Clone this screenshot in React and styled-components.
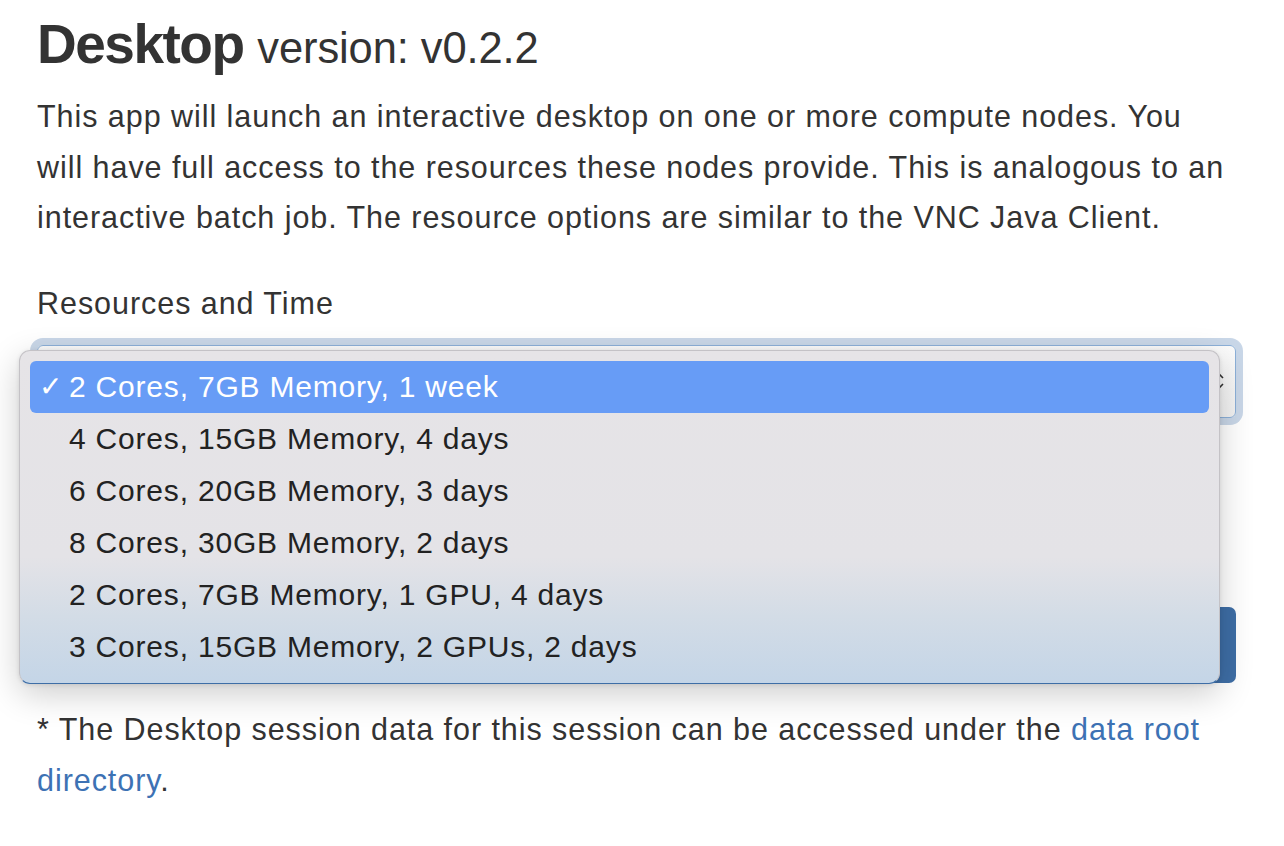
import React from "react";
import styled, { createGlobalStyle } from "styled-components";

const options = [
  "2 Cores, 7GB Memory, 1 week",
  "4 Cores, 15GB Memory, 4 days",
  "6 Cores, 20GB Memory, 3 days",
  "8 Cores, 30GB Memory, 2 days",
  "2 Cores, 7GB Memory, 1 GPU, 4 days",
  "3 Cores, 15GB Memory, 2 GPUs, 2 days",
];

const App = () => {
  return (
    <Page>
      <GlobalStyle />
      <Title>
        Desktop <small>version: v0.2.2</small>
      </Title>
      <Text>
        This app will launch an interactive desktop on one or more compute nodes. You
        will have full access to the resources these nodes provide. This is analogous to an
        interactive batch job. The resource options are similar to the VNC Java Client.
      </Text>
      <Group>
        <Label>Resources and Time</Label>
        <Select>
          <Chevron viewBox="0 0 12 20">
            <path d="M2 7 L6 3 L10 7 M2 13 L6 17 L10 13" />
          </Chevron>
        </Select>
        <Menu>
          {options.map((o, i) => (
            <Item key={o} $active={i === 0}>
              <Check>{i === 0 ? "✓" : ""}</Check>
              {o}
            </Item>
          ))}
        </Menu>
      </Group>
      {/* the launch button sits under the open menu, its label hidden */}
      <Launch aria-label="Launch" />
      <Footer>
        * The Desktop session data for this session can be accessed under the{" "}
        <a href="#">data root directory</a>.
      </Footer>
    </Page>
  );
};

const GlobalStyle = createGlobalStyle`
body{
    margin: 0;
    background: #fff;
    font-family: "Liberation Sans", Arial, sans-serif;
    color: #333;
}
`;

const Page = styled.div`
width: 1199px;
padding: 14px 48px 40px 37px;
`;

const Title = styled.h1`
margin: 0 0 13px;
font-size: 55px;
line-height: 60px;
font-weight: 700;
letter-spacing: -1.5px;
color: #333;
small{
    font-size: 43.5px;
    font-weight: 400;
    letter-spacing: -0.1px;
}
`;

const Text = styled.p`
margin: 0;
font-size: 30.5px;
line-height: 50.5px;
letter-spacing: 0.95px;
`;

const Group = styled.div`
position: relative;
margin-top: 35px;
`;

const Label = styled.div`
font-size: 30.5px;
line-height: 50px;
letter-spacing: 0.95px;
margin-bottom: 17px;
`;

const Select = styled.div`
height: 71px;
border: 1px solid #8cb0d8;
border-radius: 6px;
background: linear-gradient(#fbfbfb, #f2f2f2);
box-shadow: 0 0 0 7px #c9d7e8;
display: flex;
align-items: center;
justify-content: flex-end;
padding-right: 10px;
`;

const Chevron = styled.svg`
width: 12px;
height: 20px;
fill: none;
stroke: #333;
stroke-width: 1.6;
`;

const Menu = styled.div`
position: absolute;
left: -18px;
top: 72px;
width: 1201px;
padding: 10px 10px;
box-sizing: border-box;
border: 1px solid #c4c2c6;
border-radius: 11px;
background: linear-gradient(to bottom, #e6e4e7 0%, #e4e3e7 62%, #d3dce6 80%, #c4d5e7 100%);
box-shadow: 0 10px 34px rgba(0, 0, 0, 0.2), 0 1px 4px rgba(0, 0, 0, 0.1);
border-bottom-color: #3e6ea6;
`;

const Item = styled.div`
height: 52px;
display: flex;
align-items: center;
border-radius: 6px;
font-size: 30px;
letter-spacing: 0.8px;
background: ${(p) => (p.$active ? "#679cf6" : "transparent")};
color: ${(p) => (p.$active ? "#fff" : "#222")};
`;

const Check = styled.span`
width: 39px;
padding-left: 9px;
box-sizing: border-box;
font-size: 28px;
letter-spacing: 0;
`;

const Launch = styled.button`
display: block;
width: 100%;
height: 76px;
margin-top: 189px;
border: none;
border-radius: 7px;
background: #3e6ea6;
`;

const Footer = styled.p`
margin: 21px 0 0;
font-size: 30.5px;
line-height: 51px;
letter-spacing: 0.95px;
a{
    color: #3d72b4;
    text-decoration: none;
}
`;

export default App;
